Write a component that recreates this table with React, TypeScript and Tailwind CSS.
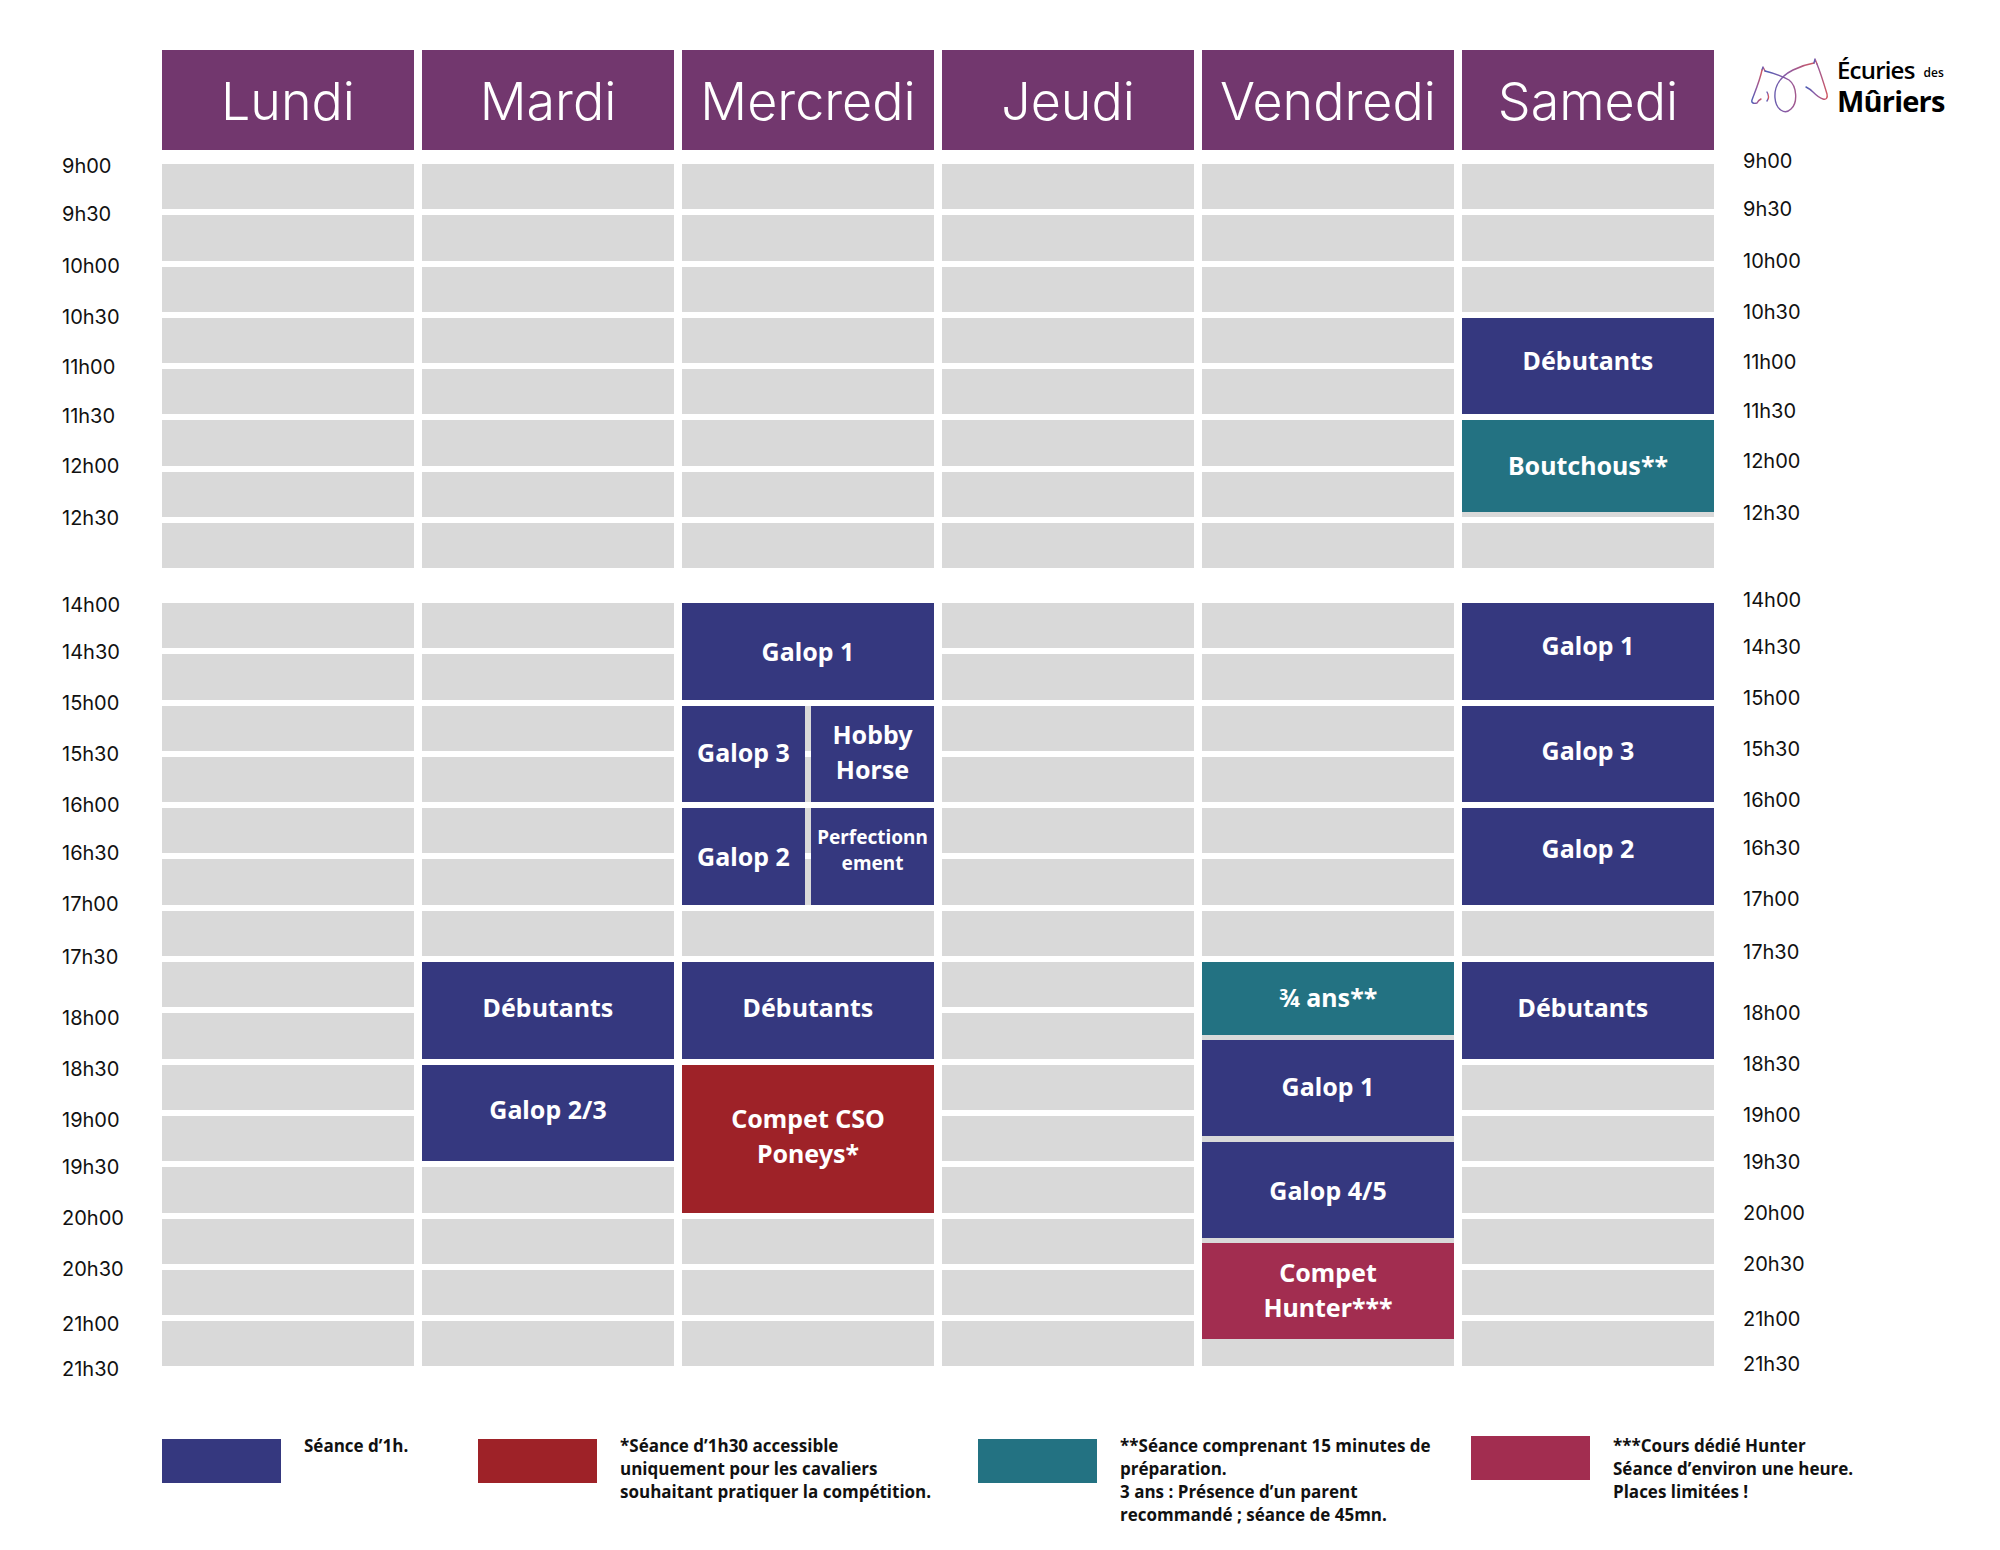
import React from "react";

const DAYS = ["Lundi", "Mardi", "Mercredi", "Jeudi", "Vendredi", "Samedi"];

const BLUE = "bg-[#35387f]";
const TEAL = "bg-[#237282]";
const RED = "bg-[#9e2228]";
const CRIMSON = "bg-[#a22d50]";

type Slot = { text: React.ReactNode; pos: string; color: string; extra?: string };

const morning: Record<string, Slot[]> = {
  Samedi: [
    { text: "Débutants", pos: "row-start-4 row-span-2", color: BLUE, extra: "pb-[12px]" },
    { text: "Boutchous**", pos: "row-start-6 row-span-2", color: TEAL, extra: "h-[92px] self-start pb-[2px]" },
  ],
};

const afternoon: Record<string, Slot[]> = {
  Mardi: [
    { text: "Débutants", pos: "row-start-8 row-span-2", color: BLUE, extra: "pb-[6px]" },
    { text: "Galop 2/3", pos: "row-start-10 row-span-2", color: BLUE, extra: "pb-[6px]" },
  ],
  Mercredi: [
    { text: "Galop 1", pos: "row-start-1 row-span-2", color: BLUE },
    { text: "Débutants", pos: "row-start-8 row-span-2", color: BLUE, extra: "pb-[6px]" },
    {
      text: (
        <>
          Compet CSO
          <br />
          Poneys*
        </>
      ),
      pos: "row-start-10 row-span-3",
      color: RED,
      extra: "pb-[6px]",
    },
  ],
  Samedi: [
    { text: "Galop 1", pos: "row-start-1 row-span-2", color: BLUE, extra: "pb-[12px]" },
    { text: "Galop 3", pos: "row-start-3 row-span-2", color: BLUE, extra: "pb-[6px]" },
    { text: "Galop 2", pos: "row-start-5 row-span-2", color: BLUE, extra: "pb-[16px]" },
    { text: "Débutants", pos: "row-start-8 row-span-2", color: BLUE, extra: "pr-[10px] pb-[6px]" },
  ],
};

const morningLabels: [string, string][] = [
  ["9h00", "mt-0"],
  ["9h30", "mt-[24px]"],
  ["10h00", "mt-[28px]"],
  ["10h30", "mt-[27px]"],
  ["11h00", "mt-[26px]"],
  ["11h30", "mt-[25px]"],
  ["12h00", "mt-[26px]"],
  ["12h30", "mt-[28px]"],
];

const afternoonLabels: [string, string][] = [
  ["14h00", "mt-[63px]"],
  ["14h30", "mt-[23px]"],
  ["15h00", "mt-[27px]"],
  ["15h30", "mt-[27px]"],
  ["16h00", "mt-[27px]"],
  ["16h30", "mt-[24px]"],
  ["17h00", "mt-[27px]"],
  ["17h30", "mt-[29px]"],
  ["18h00", "mt-[37px]"],
  ["18h30", "mt-[27px]"],
  ["19h00", "mt-[27px]"],
  ["19h30", "mt-[23px]"],
  ["20h00", "mt-[27px]"],
  ["20h30", "mt-[27px]"],
  ["21h00", "mt-[31px]"],
  ["21h30", "mt-[21px]"],
];

const eventText = "flex items-center justify-center text-center text-white font-bold text-[25px] leading-[35px]";

function Block({ slot }: { slot: Slot }) {
  return <div className={`${slot.pos} ${slot.color} ${slot.extra ?? ""} ${eventText}`}>{slot.text}</div>;
}

function GreyRows({ count }: { count: number }) {
  return (
    <div className="col-start-1 row-start-1 flex flex-col gap-[6px]">
      {Array.from({ length: count }).map((_, i) => (
        <div key={i} className="h-[45.3px] bg-[#d9d9d9]" />
      ))}
    </div>
  );
}

function Mercredi() {
  return (
    <>
      <div className="row-start-3 row-span-2 flex gap-[6px]">
        <div className={`flex-1 ${BLUE} ${eventText} pb-[2px]`}>Galop 3</div>
        <div className={`flex-1 ${BLUE} ${eventText} pb-[4px]`}>
          Hobby
          <br />
          Horse
        </div>
      </div>
      <div className="row-start-5 row-span-2 flex gap-[6px]">
        <div className={`flex-1 ${BLUE} ${eventText}`}>Galop 2</div>
        <div
          className={`flex-1 ${BLUE} flex items-center justify-center text-center text-white font-bold text-[19px] leading-[26px] pb-[12px]`}
        >
          Perfectionn
          <br />
          ement
        </div>
      </div>
    </>
  );
}

function Vendredi() {
  return (
    <div className="row-start-8 row-span-8 flex flex-col self-start">
      <div className={`h-[73px] ${TEAL} ${eventText} pb-[3px]`}>¾ ans**</div>
      <div className={`h-[96px] mt-[5px] ${BLUE} ${eventText} pb-[3px]`}>Galop 1</div>
      <div className={`h-[96px] mt-[6px] ${BLUE} ${eventText}`}>Galop 4/5</div>
      <div className={`h-[96px] mt-[5px] ${CRIMSON} ${eventText} pb-[3px]`}>
        Compet
        <br />
        Hunter***
      </div>
    </div>
  );
}

function DayColumn({ day }: { day: string }) {
  return (
    <div className="w-[252px] flex flex-col">
      <div className="h-[100px] pt-[4px] bg-[#72376e] flex items-center justify-center text-white text-[52px] font-light font-['Inter',sans-serif]">
        {day}
      </div>
      <div className="mt-[14px] grid">
        <GreyRows count={8} />
        <div className="col-start-1 row-start-1 grid grid-rows-[repeat(8,45.3px)] gap-y-[6px]">
          {(morning[day] ?? []).map((s, i) => (
            <Block key={i} slot={s} />
          ))}
        </div>
      </div>
      <div className="mt-[34.6px] grid">
        <GreyRows count={15} />
        <div className="col-start-1 row-start-1 grid grid-rows-[repeat(15,45.3px)] gap-y-[6px]">
          {(afternoon[day] ?? []).map((s, i) => (
            <Block key={i} slot={s} />
          ))}
          {day === "Mercredi" && <Mercredi />}
          {day === "Vendredi" && <Vendredi />}
        </div>
      </div>
    </div>
  );
}

function TimeLabels() {
  return (
    <div className="flex flex-col text-[20px] leading-[24px] text-[#111] font-['Inter',sans-serif]">
      {[...morningLabels, ...afternoonLabels].map(([t, m]) => (
        <div key={t} className={m}>
          {t}
        </div>
      ))}
    </div>
  );
}

function Logo() {
  return (
    <div className="flex items-start ml-[8px] pt-[5px] h-[99px]">
      <svg width="78" height="58" viewBox="0 0 78 56" fill="none" className="mt-[2px]">
        <defs>
          <linearGradient id="horse" x1="0" y1="0" x2="1" y2="0">
            <stop offset="0" stopColor="#4c5db5" />
            <stop offset="0.45" stopColor="#8d5aa3" />
            <stop offset="1" stopColor="#d0565f" />
          </linearGradient>
        </defs>
        <g stroke="url(#horse)" strokeWidth="1.4" strokeLinecap="round" strokeLinejoin="round">
          <path d="M11 12 L12 9 L14 13" />
          <path d="M11 12 C9 22 4 34 1 42 C0 45 3 46 6 45 C7 43 8 42 10 41" />
          <path d="M16 34 Q19 39 16 43" />
          <path d="M14 13 C22 15 30 17 38 22 C46 28 47 45 40 51 C34 57 25 52 24 40 C23 28 30 18 42 12 C50 8 57 6 63 5" />
          <path d="M63 5 L64 1 L66 6" />
          <path d="M66 6 C70 16 73 26 76 36 C77 40 75 42 72 41 C68 40 64 36 62 34 C60 32 57 30 55 29" />
        </g>
      </svg>
      <div className="ml-[8px] flex flex-col font-['Open_Sans',sans-serif] text-black">
        <div className="flex items-end h-[30px]">
          <span className="text-[24px] leading-[30px] font-semibold tracking-[-0.8px]">Écuries</span>
          <span className="ml-[9px] mb-[5px] text-[12px] leading-[14px] font-semibold">des</span>
        </div>
        <div className="text-[29px] leading-[32px] font-bold tracking-[-0.8px]">Mûriers</div>
      </div>
    </div>
  );
}

const legend = [
  { color: BLUE, w: "w-[316px]", lines: ["Séance d’1h."] },
  {
    color: RED,
    w: "w-[500px]",
    lines: ["*Séance d’1h30 accessible", "uniquement pour les cavaliers", "souhaitant pratiquer la compétition."],
  },
  {
    color: TEAL,
    w: "w-[493px]",
    lines: ["**Séance comprenant 15 minutes de", "préparation.", "3 ans : Présence d’un parent", "recommandé ; séance de 45mn."],
  },
  {
    color: CRIMSON,
    w: "w-[400px]",
    lines: ["***Cours dédié Hunter", "Séance d’environ une heure.", "Places limitées !"],
  },
];

export default function App() {
  return (
    <div className="w-[2000px] h-[1550px] bg-white overflow-hidden flex flex-col">
      <div className="flex h-[1390px] pt-[50px] items-start">
        <div className="w-[162px] pl-[62px] pt-[104px]">
          <TimeLabels />
        </div>
        <div className="flex gap-[8px]">
          {DAYS.map((d) => (
            <DayColumn key={d} day={d} />
          ))}
        </div>
        <div className="pl-[29px] flex flex-col">
          <Logo />
          <TimeLabels />
        </div>
      </div>
      <div className="mt-[44px] pl-[162px] flex font-['Open_Sans',sans-serif] text-[17px] leading-[23px] font-bold text-[#111]">
        {legend.map((l, i) => (
          <div key={i} className={`${l.w} flex items-start gap-[23px]`}>
            <div className={`w-[119px] h-[44px] shrink-0 ${i === 3 ? "mt-[2px]" : "mt-[5px]"} ${l.color}`} />
            <div className="whitespace-nowrap">
              {l.lines.map((t) => (
                <div key={t}>{t}</div>
              ))}
            </div>
          </div>
        ))}
      </div>
    </div>
  );
}
